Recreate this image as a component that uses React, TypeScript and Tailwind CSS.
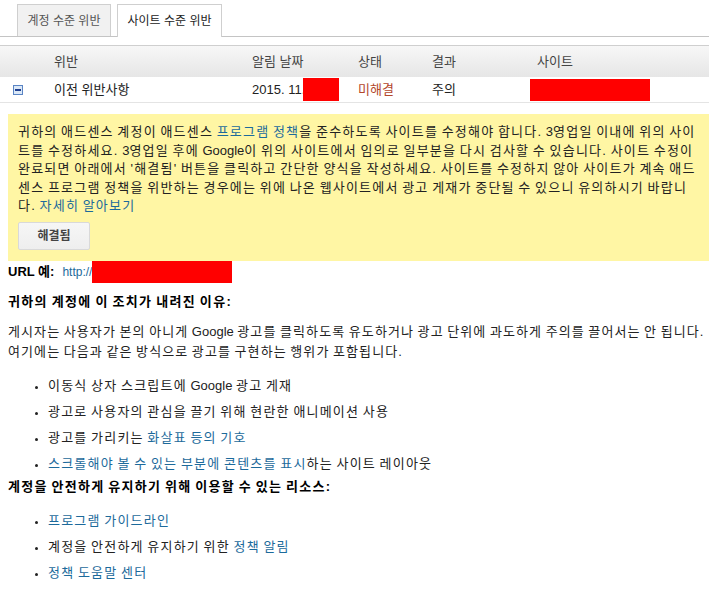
import React from "react";

const font = "font-['Liberation_Sans','Noto_Sans_CJK_KR',sans-serif]";
const link = "text-[#1c6a9b]";
// Gulim-like spacing: hangul gets a little air, word gaps stay tight
const hangul = "tracking-[1.2px] [word-spacing:-1.2px]";

const Redact = ({ className }: { className: string }) => (
  <span className={`inline-block bg-[#ff0000] align-middle ${className}`} />
);

const L = ({ children }: { children: React.ReactNode }) => (
  <span className="tracking-normal [word-spacing:0]">{children}</span>
);

const MinusBox = () => (
  <svg width="10" height="10" viewBox="0 0 10 10">
    <rect x="0.5" y="0.5" width="9" height="9" fill="#dbe8f7" stroke="#5a84c4" />
    <rect x="2" y="4" width="6" height="2" fill="#1f3f8f" />
  </svg>
);

const App = () => {
  return (
    <div className={`${font} min-h-[590px] w-[709px] overflow-hidden bg-white text-[13px] text-[#222]`}>
      {/* tabs */}
      <div className="flex h-[37px] items-end gap-[6px] border-b border-[#c4c4c4] pl-[17px]">
        <div className="flex h-[32px] w-[94px] items-center justify-center border border-b-0 border-[#cfcfcf] bg-[#f1f1f1] text-[12px] text-[#555]">
          계정 수준 위반
        </div>
        <div className="-mb-px flex h-[33px] w-[105px] items-center justify-center border border-b-0 border-[#cfcfcf] bg-white text-[12px] text-[#222]">
          사이트 수준 위반
        </div>
      </div>

      {/* table */}
      <div className="mt-[8px]">
        <div className="grid h-[32px] grid-cols-[54px_198px_106px_74px_105px_1fr] items-center border-t border-[#cfcfcf] bg-gradient-to-b from-[#f7f7f7] to-[#e6e6e6] text-[13px] text-[#444]">
          <div />
          <div>위반</div>
          <div>알림 날짜</div>
          <div>상태</div>
          <div>결과</div>
          <div>사이트</div>
        </div>
        <div className="grid h-[26px] grid-cols-[54px_198px_106px_74px_105px_1fr] items-center border-b border-[#e4e4e4]">
          <div className="flex pl-[13px]">
            <MinusBox />
          </div>
          <div>이전 위반사항</div>
          <div className="flex items-center">
            2015. 11.
            <Redact className="-ml-[2px] h-[23px] w-[36px]" />
          </div>
          <div className="text-[#b3472b]">미해결</div>
          <div>주의</div>
          <div className="-ml-[7px]">
            <Redact className="h-[22px] w-[120px]" />
          </div>
        </div>
      </div>

      {/* notice */}
      <div className={`ml-[8px] mt-[11px] w-[712px] bg-[#fff6a4] pb-[11px] pl-[10px] pr-[15px] pt-[9px] ${hangul}`}>
        <p className="leading-[18.5px]">
          귀하의 애드센스 계정이 애드센스 <span className={link}>프로그램 정책</span>을 준수하도록 사이트를 수정해야
          합니다. <L>3</L>영업일 이내에 위의 사이트를 수정하세요. <L>3</L>영업일 후에 <L>Google</L>이 위의 사이트에서
          임의로 일부분을 다시 검사할 수 있습니다. 사이트 수정이 완료되면 아래에서 '해결됨' 버튼을 클릭하고 간단한 양식을
          작성하세요. 사이트를 수정하지 않아 사이트가 계속 애드센스 프로그램 정책을 위반하는 경우에는 위에 나온
          웹사이트에서 광고 게재가 중단될 수 있으니 유의하시기 바랍니다. <span className={link}>자세히 알아보기</span>
        </p>
        <button className="mt-[6px] h-[28px] w-[72px] rounded-[2px] border border-[#d9d9d9] bg-gradient-to-b from-[#f6f6f6] to-[#eeeeee] text-[12px] font-bold tracking-normal text-[#444]">
          해결됨
        </button>
      </div>

      {/* details */}
      <div className="w-[712px] pl-[8px] [word-spacing:-1.2px]">
        <div className="flex h-[22px] items-center [word-spacing:0]">
          <span className="font-bold text-black">URL 예:</span>
          <span className={`ml-[8px] text-[12px] ${link}`}>http://</span>
          <Redact className="h-[22px] w-[140px]" />
        </div>
        <p className="mt-[9px] font-bold tracking-[1.35px] text-black">귀하의 계정에 이 조치가 내려진 이유:</p>
        <p className="mt-[11px] leading-[20px] tracking-[1.1px]">
          게시자는 사용자가 본의 아니게 <L>Google</L> 광고를 클릭하도록 유도하거나 광고 단위에 과도하게 주의를 끌어서는 안
          됩니다. 여기에는 다음과 같은 방식으로 광고를 구현하는 행위가 포함됩니다.
        </p>
        <ul className="mt-[15px] flex list-disc flex-col gap-[8px] pl-[40px] leading-[18px] tracking-[1.2px] marker:text-[11px]">
          <li>
            이동식 상자 스크립트에 <L>Google</L> 광고 게재
          </li>
          <li>광고로 사용자의 관심을 끌기 위해 현란한 애니메이션 사용</li>
          <li>
            광고를 가리키는 <span className={link}>화살표 등의 기호</span>
          </li>
          <li>
            <span className={link}>스크롤해야 볼 수 있는 부분에 콘텐츠를 표시</span>하는 사이트 레이아웃
          </li>
        </ul>
        <p className="mt-[4px] font-bold tracking-[1.3px] text-black">계정을 안전하게 유지하기 위해 이용할 수 있는 리소스:</p>
        <ul className="mt-[15px] flex list-disc flex-col gap-[8px] pl-[40px] leading-[18px] tracking-[1.2px] marker:text-[11px]">
          <li>
            <span className={link}>프로그램 가이드라인</span>
          </li>
          <li>
            계정을 안전하게 유지하기 위한 <span className={link}>정책 알림</span>
          </li>
          <li>
            <span className={link}>정책 도움말 센터</span>
          </li>
        </ul>
      </div>
    </div>
  );
};

export default App;
